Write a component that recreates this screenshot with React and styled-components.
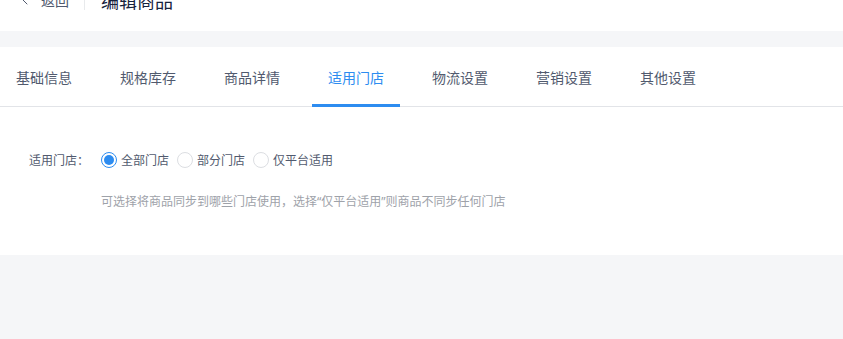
import React, { useState } from "react";
import styled, { createGlobalStyle } from "styled-components";
import { ChevronLeft } from "lucide-react";

const Global = createGlobalStyle`
  html, body { margin: 0; padding: 0; background: #f5f6f8; }
  body { font-family: "Noto Sans", "Noto Sans CJK SC", sans-serif; overflow: hidden; }
  * { box-sizing: border-box; }
`;

const Page = styled.div`
  display: flex;
  flex-direction: column;
  gap: 16px;
  margin-top: -25px;
`;

const Header = styled.header`
  height: 56px;
  background: #fff;
  display: flex;
  align-items: center;
  padding: 0 0 6px 17px;
`;

const Back = styled.div`
  display: flex;
  align-items: center;
  gap: 8px;
  color: #515a6e;
  font-size: 14px;
  cursor: pointer;
`;

const Divider = styled.span`
  width: 1px;
  height: 20px;
  background: #e8eaec;
  margin: 0 16px 0 15px;
`;

const Title = styled.h1`
  margin: 0;
  font-size: 18px;
  font-weight: 400;
  color: #17233d;
`;

const Card = styled.section`
  background: #fff;
`;

const TabBar = styled.nav`
  display: flex;
  gap: 16px;
  height: 60px;
  border-bottom: 1px solid #e2e4e8;
`;

const Tab = styled.div`
  position: relative;
  padding: 0 16px;
  display: flex;
  align-items: center;
  font-size: 14px;
  color: ${(p) => (p.$active ? "#2d8cf0" : "#515a6e")};
  cursor: pointer;
  &::after {
    content: "";
    position: absolute;
    left: 0;
    right: 0;
    bottom: -1px;
    height: 3px;
    background: ${(p) => (p.$active ? "#2d8cf0" : "transparent")};
  }
`;

const Form = styled.div`
  padding: 37px 0 44px;
  display: flex;
  flex-direction: column;
  gap: 17px;
`;

const Row = styled.div`
  display: flex;
  align-items: center;
  height: 32px;
`;

const Label = styled.label`
  width: 101px;
  padding-left: 29px;
  font-size: 12px;
  color: #515a6e;
`;

const RadioGroup = styled.div`
  display: flex;
  align-items: center;
  gap: 8px;
`;

const RadioItem = styled.label`
  display: flex;
  align-items: center;
  gap: 4px;
  font-size: 12px;
  color: #515a6e;
  cursor: pointer;
`;

const Circle = styled.span`
  width: 16px;
  height: 16px;
  border-radius: 50%;
  border: 1px solid ${(p) => (p.$checked ? "#2d8cf0" : "#dcdee2")};
  display: flex;
  align-items: center;
  justify-content: center;
  &::after {
    content: "";
    width: 10px;
    height: 10px;
    border-radius: 50%;
    background: ${(p) => (p.$checked ? "#2d8cf0" : "transparent")};
  }
`;

const Help = styled.div`
  padding-left: 101px;
  font-size: 12px;
  line-height: 18px;
  color: #9ea2a9;
`;

const tabs = ["基础信息", "规格库存", "商品详情", "适用门店", "物流设置", "营销设置", "其他设置"];
const options = ["全部门店", "部分门店", "仅平台适用"];

export default function App() {
  const [active, setActive] = useState(3);
  const [choice, setChoice] = useState(0);
  return (
    <>
      <Global />
      <Page>
        <Header>
          <Back>
            <ChevronLeft size={16} strokeWidth={1.5} color="#515a6e" />
            <span>返回</span>
          </Back>
          <Divider />
          <Title>编辑商品</Title>
        </Header>
        <Card>
          <TabBar>
            {tabs.map((t, i) => (
              <Tab key={t} $active={i === active} onClick={() => setActive(i)}>
                {t}
              </Tab>
            ))}
          </TabBar>
          <Form>
            <Row>
              <Label>适用门店：</Label>
              <RadioGroup>
                {options.map((o, i) => (
                  <RadioItem key={o} onClick={() => setChoice(i)}>
                    <Circle $checked={i === choice} />
                    {o}
                  </RadioItem>
                ))}
              </RadioGroup>
            </Row>
            <Help>可选择将商品同步到哪些门店使用，选择“仅平台适用”则商品不同步任何门店</Help>
          </Form>
        </Card>
      </Page>
    </>
  );
}
